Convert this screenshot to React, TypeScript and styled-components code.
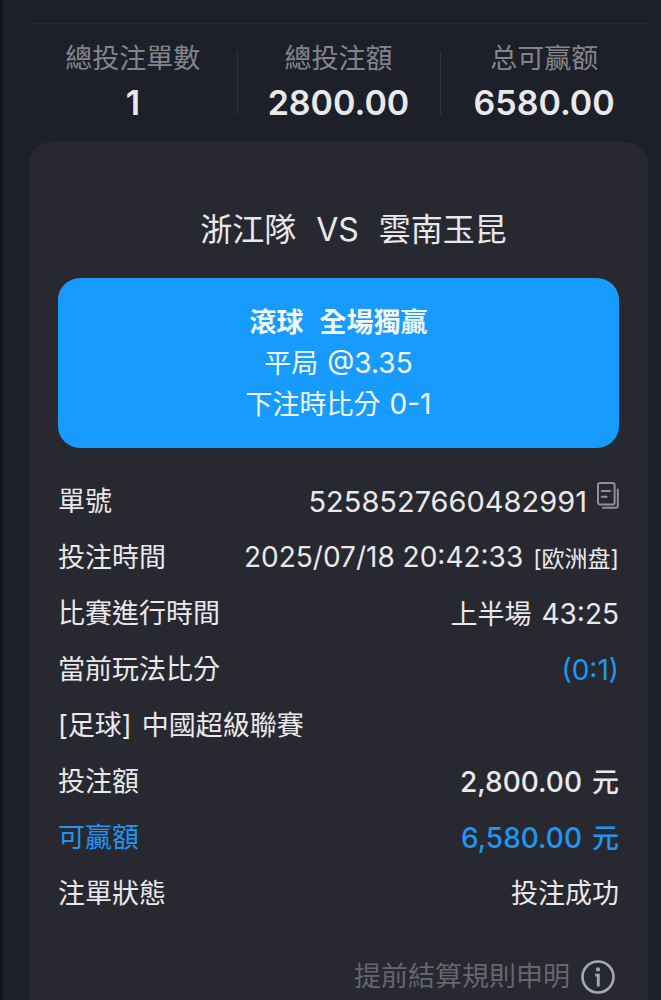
import React from 'react';
import styled, { createGlobalStyle } from 'styled-components';

const GlobalStyle = createGlobalStyle`
  *, *::before, *::after { box-sizing: border-box; }
  html { background: #1e2029; }
  body {
    margin: 0;
    color: #e9e9ec;
    font-family: Inter, "Noto Sans CJK TC", "Noto Sans CJK SC", sans-serif;
    font-size: 27px;
    line-height: 40px;
  }
`;

const Page = styled.main`
  display: flex;
  flex-direction: column;
  min-height: 100vh;
  padding: 23px 13px 0 26px;
  border-left: 3px solid #121419;
  background: #1e2029;
`;

const Summary = styled.dl`
  display: grid;
  grid-template-columns: 102fr 100fr 102fr;
  margin: 0;
  padding: 15px 0 16px;
  border-top: 1px solid #282b33;
`;

const Stat = styled.div`
  display: flex;
  flex-direction: column;
  align-items: center;
  position: relative;

  & + &::before {
    content: '';
    position: absolute;
    left: 0;
    top: 12px;
    bottom: 11px;
    width: 1px;
    background: #30333b;
  }
`;

const StatLabel = styled.dt`
  color: #84858c;
  line-height: 40px;
`;

const StatValue = styled.dd`
  margin: 0;
  font-size: 34px;
  font-weight: 600;
  line-height: 47px;
`;

const Card = styled.section`
  flex: 1;
  padding: 64px 29px 4px;
  border-radius: 22px 22px 0 0;
  background: #282831;
`;

const Match = styled.h1`
  display: flex;
  justify-content: center;
  gap: 20px;
  margin: 0 0 24px;
  padding-left: 30px;
  font-size: 32px;
  font-weight: 400;
  line-height: 48px;
`;

const Pick = styled.div`
  display: flex;
  flex-direction: column;
  align-items: center;
  margin-bottom: 26px;
  padding: 24px 16px 23px;
  border-radius: 22px;
  background: #189bff;
  color: #f2f9ff;
`;

const PickLine = styled.p<{ $strong?: boolean }>`
  display: flex;
  align-items: baseline;
  gap: ${(p) => (p.$strong ? '16px' : '9px')};
  margin: 0;
  font-weight: ${(p) => (p.$strong ? 700 : 400)};
  line-height: 41px;
`;

const Details = styled.dl`
  margin: 0;
`;

const Row = styled.div<{ $accent?: boolean }>`
  display: flex;
  align-items: center;
  justify-content: space-between;
  height: 56px;
  white-space: nowrap;
  color: ${(p) => (p.$accent ? '#1e97f3' : 'inherit')};
`;

const Term = styled.dt`
  display: flex;
  gap: 10px;
`;

const Value = styled.dd<{ $accent?: boolean; $medium?: boolean }>`
  display: flex;
  align-items: baseline;
  gap: 10px;
  margin: 0;
  font-weight: ${(p) => (p.$medium ? 500 : 400)};
  color: ${(p) => (p.$accent ? '#1e97f3' : 'inherit')};
`;

const Figure = styled.span<{ $large?: boolean }>`
  font-size: ${(p) => (p.$large ? '29px' : '28px')};
`;

const Market = styled.span`
  font-size: 23px;
  font-family: Inter, "Noto Sans CJK SC", sans-serif;
`;

const IconButton = styled.button`
  display: block;
  padding: 0;
  border: 0;
  background: none;
  color: inherit;
  cursor: pointer;

  svg { display: block; }
`;

const CopyButton = styled(IconButton)`
  align-self: flex-start;
`;

const Footer = styled.footer`
  display: flex;
  align-items: center;
  justify-content: flex-end;
  gap: 11px;
  margin-top: 38px;
  padding-right: 4px;
  color: #65666f;
`;

const RulesLink = styled.a`
  color: inherit;
  line-height: 34px;
  text-decoration: none;
`;

const CopyIcon = () => (
  <svg width="22" height="27" viewBox="0 0 22 27" fill="none" stroke="#8f909a" strokeWidth="2" strokeLinecap="round" aria-hidden="true">
    <rect x="1" y="1" width="16.6" height="21.6" rx="2" />
    <path d="M4.8 9H13.2M4.8 14.7H9.6" />
    <path d="M20.8 7.5V24Q20.8 25.8 19 25.8H6" />
  </svg>
);

const InfoIcon = () => (
  <svg width="34" height="34" viewBox="0 0 34 34" fill="none" aria-hidden="true">
    <circle cx="17" cy="17" r="15.5" stroke="#a4a8b5" strokeWidth="2.6" />
    <circle cx="17" cy="9.4" r="2.1" fill="#a4a8b5" />
    <path d="M14.2 15.1H17.3V26.5" stroke="#a4a8b5" strokeWidth="2.9" />
  </svg>
);

const stats = [
  { label: '總投注單數', value: '1' },
  { label: '總投注額', value: '2800.00' },
  { label: '总可赢额', value: '6580.00' },
];

export default function App() {
  return (
    <>
      <GlobalStyle />
      <Page lang="zh-Hant">
        <Summary>
          {stats.map((s) => (
            <Stat key={s.label}>
              <StatLabel>{s.label}</StatLabel>
              <StatValue>{s.value}</StatValue>
            </Stat>
          ))}
        </Summary>
        <Card>
          <Match>
            <span>浙江隊</span>
            <span>VS</span>
            <span>雲南玉昆</span>
          </Match>
          <Pick>
            <PickLine $strong><span>滾球</span><span>全場獨贏</span></PickLine>
            <PickLine><span>平局</span><Figure>@3.35</Figure></PickLine>
            <PickLine><span>下注時比分</span><Figure>0-1</Figure></PickLine>
          </Pick>
          <Details>
            <Row>
              <Term>單號</Term>
              <Value>
                <Figure $large>5258527660482991</Figure>
                <CopyButton type="button" aria-label="複製單號"><CopyIcon /></CopyButton>
              </Value>
            </Row>
            <Row>
              <Term>投注時間</Term>
              <Value><Figure>2025/07/18 20:42:33</Figure><Market>[欧洲盘]</Market></Value>
            </Row>
            <Row>
              <Term>比賽進行時間</Term>
              <Value><span>上半場</span><Figure>43:25</Figure></Value>
            </Row>
            <Row>
              <Term>當前玩法比分</Term>
              <Value $accent><Figure>(0:1)</Figure></Value>
            </Row>
            <Row>
              <Term><span>[足球]</span><span>中國超級聯賽</span></Term>
            </Row>
            <Row>
              <Term>投注額</Term>
              <Value $medium><Figure>2,800.00</Figure><span>元</span></Value>
            </Row>
            <Row $accent>
              <Term>可贏額</Term>
              <Value $medium><Figure>6,580.00</Figure><span>元</span></Value>
            </Row>
            <Row>
              <Term>注單狀態</Term>
              <Value>投注成功</Value>
            </Row>
          </Details>
          <Footer>
            <RulesLink href="#rules">提前結算規則申明</RulesLink>
            <IconButton type="button" aria-label="規則說明"><InfoIcon /></IconButton>
          </Footer>
        </Card>
      </Page>
    </>
  );
}
